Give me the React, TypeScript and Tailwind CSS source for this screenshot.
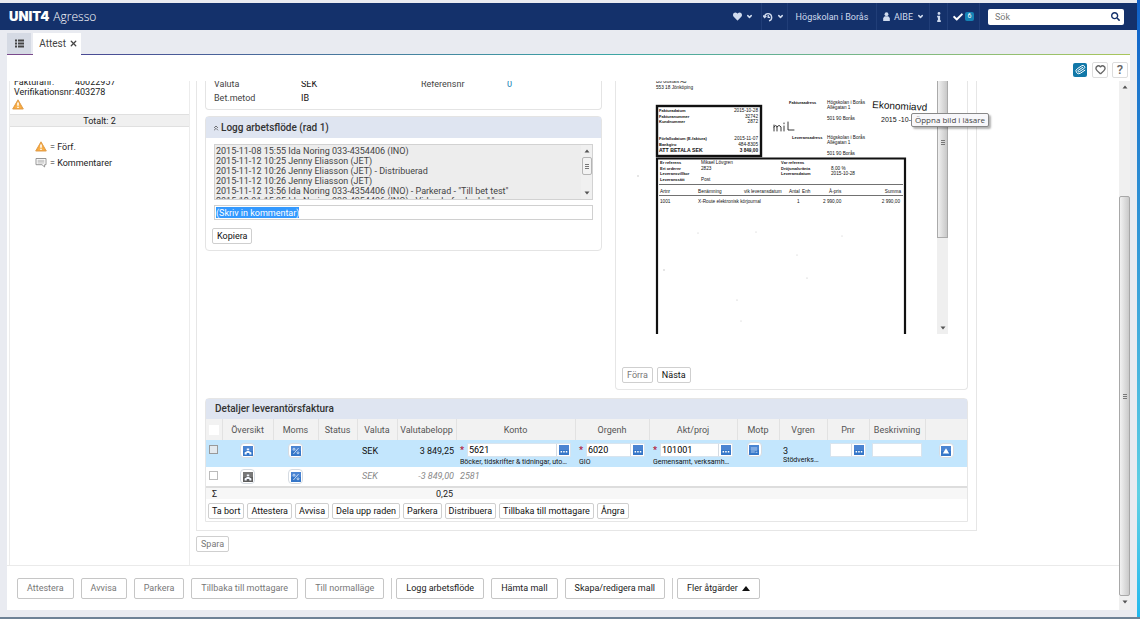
import type { ReactNode } from "react";
import { ChevronDown, ChevronsUp, Heart, Paperclip, X } from "lucide-react";
import { FaHeart, FaInfo, FaCheck, FaSearch } from "react-icons/fa";

const LOG = [
  "2015-11-08 15:55 Ida Noring 033-4354406 (INO)",
  "2015-11-12 10:25 Jenny Eliasson (JET)",
  "2015-11-12 10:26 Jenny Eliasson (JET) - Distribuerad",
  "2015-11-12 10:26 Jenny Eliasson (JET)",
  '2015-11-12 13:56 Ida Noring 033-4354406 (INO) - Parkerad - "Till bet test"',
  '2015-12-01 15:35 Ida Noring 033-4354406 (INO) - Vidarebefordrad - "."',
];

function WarningIcon() {
  return (
    <svg viewBox="0 0 12 11" className="h-[11px] w-3 shrink-0" aria-hidden="true">
      <path d="M6 .8 11.3 10H.7z" fill="#f29a2e" stroke="#e0a050" strokeWidth="1" strokeLinejoin="round" />
      <path d="M6 2.2 9.9 9.2H2.1z" fill="#f9b04a" />
      <path d="M6 3.4v3.4M6 7.8v1.3" stroke="#fff" strokeWidth="1.5" />
    </svg>
  );
}

function CommentIcon() {
  return (
    <svg viewBox="0 0 12 11" className="h-[11px] w-3 shrink-0" aria-hidden="true">
      <path d="M1 1.500h10v6.200H9.600V10L7 7.700H1z" fill="#fff" stroke="#8a8a8a" strokeWidth=".9" />
      <path d="M2.6 3.3h6.8M2.6 4.7h6.8M2.6 6h6.8" stroke="#a5a5a5" strokeWidth=".7" />
    </svg>
  );
}

function Tile({ kind, gray }: { kind: "overview" | "percent" | "dots" | "list" | "up"; gray?: boolean }) {
  return (
    <svg viewBox="0 0 10 10" className="size-[10px]" aria-hidden="true">
      <rect width="10" height="10" rx=".6" fill={gray ? "#5e5e5e" : "#3576c8"} />
      <rect width="10" height="5" rx=".6" fill={gray ? "#777" : "#4a84d2"} />
      {kind === "overview" && <path d="M3.800 2.400h2.400v1.600H3.800zM1.600 8.600V6.400L5 4.600l3.400 1.800v2.200H6.300V7H3.700v1.600z" fill="#f4f8ff" />}
      {kind === "percent" && (
        <g fill="none" stroke="#e2edfb" strokeWidth=".8">
          <path d="M7.600 2 2.400 8" /><circle cx="3" cy="3.200" r="1" /><circle cx="7" cy="6.800" r="1" />
        </g>
      )}
      {kind === "dots" && <path d="M1.600 6h1.500v1.500H1.600zM4.200 6h1.500v1.500H4.200zM6.800 6h1.500v1.500H6.800z" fill="#fff" />}
      {kind === "list" && <path d="M1.800 3h6.400M1.800 5h6.400M1.800 7h4M6.600 7.300h1.800" stroke="#d4e4fa" strokeWidth=".8" />}
      {kind === "up" && <path d="M5 2.200 8.200 7.600H1.800z" fill="#fff" />}
    </svg>
  );
}

function TileButton({ kind, gray, label }: { kind: "overview" | "percent" | "list" | "up"; gray?: boolean; label: string }) {
  return (
    <button type="button" aria-label={label} className="inline-flex size-[15px] items-center justify-center rounded-sm border border-[#d5dbe2] bg-white">
      <Tile kind={kind} gray={gray} />
    </button>
  );
}

function Lookup({ value, label, required }: { value: string; label: string; required?: boolean }) {
  return (
    <div className="flex h-[14px] items-center gap-[3px]">
      {required && <span className="w-1 text-[9px] leading-none font-bold text-[#b3203c]">*</span>}
      <div className="flex h-full min-w-0 flex-1 border border-[#d8e4ee] bg-white">
        <input aria-label={label} defaultValue={value} className="h-full w-0 min-w-0 flex-1 px-px text-[9px] text-black outline-none" />
        <button type="button" aria-label={"Sök " + label} className="flex w-[14px] items-center justify-center border-l border-[#d5dbe2]">
          <Tile kind="dots" />
        </button>
      </div>
    </div>
  );
}

function SmallButton({ children, muted, tight }: { children: ReactNode; muted?: boolean; tight?: boolean }) {
  return (
    <button
      type="button"
      className={
        "h-4 rounded-xs border border-[#cfcfcf] bg-white text-[9px] leading-none whitespace-nowrap " +
        (tight ? "px-[3px] " : "px-1 ") +
        (muted ? "text-[#777]" : "text-[#111]")
      }
    >
      {children}
    </button>
  );
}

function FooterButton({ children, muted }: { children: ReactNode; muted?: boolean }) {
  return (
    <button type="button" className={"flex h-[21px] items-center gap-1 rounded-xs border border-[#c6c6c6] bg-white px-[9px] text-[9px] leading-none whitespace-nowrap " + (muted ? "text-[#777]" : "text-[#1a1a1a]")}>
      {children}
    </button>
  );
}

function Arrow({ up }: { up?: boolean }) {
  return (
    <svg viewBox="0 0 6 4" className="h-1 w-[6px]" aria-hidden="true">
      <path d={up ? "M3 .5 5.5 3.5h-5z" : "M3 3.5.5.5h5z"} fill="#555" />
    </svg>
  );
}

function InvoiceScan() {
  return (
    <svg viewBox="620 81 317 253" className="h-[253px] w-[317px] shrink-0 font-['Liberation_Sans',Arial,sans-serif]" fill="#111" fontSize="4.7" role="img" aria-label="Fakturabild">
      <text x="656" y="83">Bo Gustafs AB</text>
      <text x="656" y="88.500">553 18  Jönköping</text>
      <g fill="none" stroke="#111">
        <rect x="657" y="106" width="104" height="50" strokeWidth="2.400" />
        <path d="M657 334V158.500H905V334" strokeWidth="2.200" />
        <path d="M659 184.500H903M659 195.500H903" strokeWidth=".6" />
      </g>
      <g fontWeight="bold" fontSize="4">
        <text x="659" y="112">Fakturadatum</text>
        <text x="659" y="117.500">Fakturanummer</text>
        <text x="659" y="123">Kundnummer</text>
        <text x="659" y="140">Förfallodatum (E-faktura)</text>
        <text x="659" y="145.500">Bankgiro</text>
        <text x="659" y="152" fontSize="5.200">ATT BETALA SEK</text>
        <text x="789" y="104">Fakturaadress</text>
        <text x="792" y="138.500">Leveransadress</text>
        <text x="660" y="164">Er referens</text>
        <text x="660" y="169.500">Ert ordernr</text>
        <text x="660" y="175">Leveransvillkor</text>
        <text x="660" y="180.500">Leveranssätt</text>
        <text x="781" y="164">Vår referens</text>
        <text x="781" y="169.500">Dröjsmålsränta</text>
        <text x="781" y="175">Leveransdatum</text>
      </g>
      <g textAnchor="end">
        <text x="758" y="112">2015-10-28</text>
        <text x="758" y="117.500">32742</text>
        <text x="758" y="123">2872</text>
        <text x="758" y="140">2015-11-07</text>
        <text x="758" y="145.500">484-8305</text>
        <text x="758" y="152" fontWeight="bold">3 849,00</text>
        <text x="901" y="192.500">Summa</text>
        <text x="900" y="203">2 990,00</text>
      </g>
      <text x="827" y="104">Högskolan i Borås</text>
      <text x="827" y="109">Allégatan 1</text>
      <text x="827" y="120">501 90  Borås</text>
      <text x="827" y="138.500">Högskolan i Borås</text>
      <text x="827" y="144">Allégatan 1</text>
      <text x="827" y="155">501 90  Borås</text>
      <text x="701" y="164">Mikael Lövgren</text>
      <text x="701" y="169.500">2823</text>
      <text x="701" y="180.500">Post</text>
      <text x="831" y="169.500">8,00 %</text>
      <text x="831" y="175">2015-10-28</text>
      <text x="660" y="192.500">Artnr</text>
      <text x="698" y="192.500">Benämning</text>
      <text x="744" y="192.500">vik leveransdatum</text>
      <text x="789" y="192.500">Antal</text>
      <text x="802" y="192.500">Enh</text>
      <text x="829" y="192.500">À-pris</text>
      <text x="660" y="203">1001</text>
      <text x="698" y="203">X-Route elektronisk körjournal</text>
      <text x="797" y="203">1</text>
      <text x="823" y="203">2 990,00</text>
      <text x="872" y="108" fontSize="10" transform="rotate(3 872 108)">Ekonomiavd</text>
      <text x="881" y="121.500" fontSize="7">2015 -10- 2</text>
      <path d="M774 131v-6M774 127q2-3 3 0v4M777 127q2-3 4 0v4M784 126v5M784 123v.8M788 122v8h6" fill="none" stroke="#222" strokeWidth=".9" strokeLinecap="round" />
      <g fill="#bbb">
        <circle cx="664" cy="270" r=".7" /><circle cx="638" cy="176" r=".7" /><circle cx="797" cy="255" r=".5" />
        <circle cx="807" cy="278" r=".6" /><circle cx="756" cy="232" r=".5" /><circle cx="842" cy="236" r=".5" />
        <circle cx="737" cy="300" r=".6" /><circle cx="741" cy="321" r=".5" /><circle cx="698" cy="233" r=".5" />
      </g>
    </svg>
  );
}

const TH = "border-r border-[#e2e2e2] font-normal";

export default function App() {
  return (
    <div className="flex h-screen flex-col overflow-hidden bg-[#e9ebf1] font-[Roboto,'Liberation_Sans',sans-serif] text-[9px] leading-[10px] text-[#333]">
      <div className="flex min-h-0 flex-1">
        <div className="flex min-w-0 flex-1 flex-col">
          <header className="mt-[3px] flex h-[27px] shrink-0 items-center bg-[#14316b] pl-[9px] text-[#d0dbee]">
            <a href="#" className="flex items-baseline gap-1 text-white">
              <span className="font-[Inter,sans-serif] text-[13px] leading-none font-black">UNIT4</span>
              <span className="font-['Open_Sans',sans-serif] text-[12px] leading-none font-light">Agresso</span>
            </a>
            <nav className="ml-auto flex h-full items-center">
              <button type="button" aria-label="Favoriter" className="flex h-full w-[31px] items-center gap-1 border-r border-[#213e78] pl-[2px]">
                <FaHeart size={9} /><ChevronDown size={7} strokeWidth={5} />
              </button>
              <button type="button" aria-label="Historik" className="flex h-full w-[26px] items-center gap-1 border-r border-[#213e78] pl-px">
                <svg viewBox="0 0 10 10" className="size-[10px]" fill="none" stroke="currentColor" strokeWidth="1.3" aria-hidden="true">
                  <path d="M1.5 5A3.600 3.600 0 1 1 6 8.800M0 3.500 1.600 5.600 3.400 4M5.200 3v2.400h2" />
                </svg>
                <ChevronDown size={7} strokeWidth={5} />
              </button>
              <span className="flex h-full w-[89px] items-center justify-center border-r border-[#213e78] text-[9px]">Högskolan i Borås</span>
              <button type="button" className="flex h-full w-[53px] items-center justify-end gap-1 border-r border-[#213e78] pr-[5px] text-[9px]">
                <svg viewBox="0 0 8 10" className="h-[9px] w-[7px]" fill="currentColor" aria-hidden="true">
                  <circle cx="4" cy="2.300" r="2.200" /><path d="M2 4.600h4l1.800 2V10H.2V6.600z" />
                </svg>
                AIBE<ChevronDown size={7} strokeWidth={5} />
              </button>
              <button type="button" aria-label="Information" className="flex h-full w-[18px] items-center justify-center border-r border-[#213e78]"><FaInfo size={10} /></button>
              <button type="button" aria-label="Uppgifter" className="flex h-full w-[32px] items-center justify-center gap-[2px] border-r border-[#213e78] text-white">
                <FaCheck size={10} />
                <span className="flex size-[9px] items-center justify-center rounded-xs bg-[#1583b5] text-[7px] leading-none">6</span>
              </button>
            </nav>
            <label className="mr-[13px] ml-2 flex h-4 w-[136px] items-center rounded-xs bg-white pr-1 pl-[7px] text-[#14316b]">
              <input type="search" aria-label="Sök" placeholder="Sök" className="w-0 min-w-0 flex-1 text-[9px] outline-none placeholder:text-[#777]" />
              <FaSearch size={9} />
            </label>
          </header>

          <div className="flex h-6 shrink-0 items-stretch px-[7px] pt-[3px]">
            <button type="button" aria-label="Meny" className="flex w-6 items-center justify-center bg-[#d5dae4] text-[#444]">
              <svg viewBox="0 0 9 9" className="size-[9px]" fill="currentColor" aria-hidden="true">
                <path d="M0 .500h2v2H0zM3 .500h6v2H3zM0 3.500h2v2H0zM3 3.500h6v2H3zM0 6.500h2v2H0zM3 6.500h6v2H3z" />
              </svg>
            </button>
            <button type="button" className="ml-[2px] flex w-12 items-center justify-end gap-[3px] bg-white pr-[3px] text-[10px] text-[#444]">
              Attest<X size={9} strokeWidth={3.5} />
            </button>
          </div>

          <div className="mr-[7px] ml-[7px] flex min-h-0 flex-1 flex-col bg-white">
            <div className="flex h-px shrink-0">
              <div className="w-[26px] bg-[#7a4a8c]" />
              <div className="w-12 bg-white" />
              <div className="flex-1 bg-linear-to-r from-[#4a4a94] via-[#3ba5a5] via-50% to-[#a9c65a]" />
            </div>
            <div className="flex h-[26px] shrink-0 items-center justify-end gap-1 pt-[3px] pr-[2px]">
              <button type="button" aria-label="Bilagor" className="mr-px flex size-[14px] items-center justify-center rounded-xs bg-[#1178a8] text-white"><Paperclip size={11} className="rotate-12" /></button>
              <button type="button" aria-label="Favorit" className="flex size-4 items-center justify-center rounded-xs border border-[#ddd] text-[#666]"><Heart size={11} strokeWidth={3} /></button>
              <button type="button" aria-label="Hjälp" className="flex size-4 items-center justify-center rounded-xs border border-[#ddd] text-[13px] leading-none font-medium text-[#666]">?</button>
            </div>

            <div className="flex min-h-0 flex-1">
              <div className="flex min-w-0 flex-1 flex-col">
                <div className="flex min-h-0 flex-1 overflow-hidden border-b border-[#eaeaea] pl-[2px]">
                  <aside className="w-[181px] shrink-0 overflow-hidden border-x border-[#ececec]">
                    <dl className="-mt-1 grid grid-cols-[61px_1fr] pl-1 leading-[10px] text-[#222]">
                      <dt>Fakturanr:</dt><dd>40022957</dd>
                      <dt>Verifikationsnr:</dt><dd>403278</dd>
                    </dl>
                    <div className="mt-[2px] h-[15px] pl-[2px]"><WarningIcon /></div>
                    <div className="flex h-[13px] items-center justify-center border-y border-[#e0e0e0] bg-[#f0f0f0] text-[#222]">Totalt: 2</div>
                    <div className="mt-[14px] flex flex-col gap-[5px] pl-[25px] text-[#222]">
                      <p className="flex items-center gap-[3px]"><WarningIcon />= Förf.</p>
                      <p className="flex items-center gap-[3px]"><CommentIcon />= Kommentarer</p>
                    </div>
                  </aside>

                  <main className="min-w-0 flex-1 pl-[6px]">
                    <div className="max-w-[781px] border-x border-b border-[#e6e6e6] px-2 pb-2">
                      <div className="flex h-[309px] items-start gap-[13px]">
                        <div className="min-w-0 flex-1">
                          <section className="flow-root h-[29px] rounded-b-sm border-x border-b border-[#e4e4e4]">
                            <dl className="-mt-[3px] grid grid-cols-[87px_120px_86px_1fr] gap-y-px pl-2 leading-[13px] text-[#444]">
                              <dt>Valuta</dt><dd className="text-[#111]">SEK</dd>
                              <dt>Referensnr</dt><dd className="text-[#1682b4]">0</dd>
                              <dt>Bet.metod</dt><dd className="text-[#111]">IB</dd>
                            </dl>
                          </section>
                          <section className="mt-[6px] rounded-sm border border-[#e4e4e4] pb-[6px]">
                            <h2 className="flex h-[21px] items-center gap-px bg-[#dfe5f1] pl-[6px] text-[10px] font-medium text-[#333]">
                              <ChevronsUp size={8} />Logg arbetsflöde (rad 1)
                            </h2>
                            <div className="mx-2 mt-[6px] flex h-14 border border-[#d2d2d2] bg-[#ededed]">
                              <div className="min-w-0 flex-1 overflow-hidden pt-px pl-px leading-[10px] whitespace-nowrap text-[#444]">
                                {LOG.map((l, i) => <p key={i}>{l}</p>)}
                              </div>
                              <div className="flex w-[11px] flex-col items-center bg-[#f0f0f0] py-1">
                                <Arrow up />
                                <div className="mt-1 flex h-[18px] w-[10px] flex-col items-center justify-center gap-px rounded-xs border border-[#b5b5b5] bg-[#f3f3f3]">
                                  <i className="h-px w-1 bg-[#777]" /><i className="h-px w-1 bg-[#777]" /><i className="h-px w-1 bg-[#777]" />
                                </div>
                                <div className="mt-auto"><Arrow /></div>
                              </div>
                            </div>
                            <div className="mx-2 mt-[5px] flex h-[15px] items-center border border-[#d0d0d0] bg-white px-px">
                              <input aria-label="Kommentar" defaultValue="(Skriv in kommentar)" className="field-sizing-content h-[11px] bg-[#3399ff] text-[9px] leading-none text-white outline-none" />
                            </div>
                            <div className="mt-2 pl-[6px]"><SmallButton>Kopiera</SmallButton></div>
                          </section>
                        </div>

                        <section className="flex w-[353px] shrink-0 flex-col rounded-b-sm border-x border-b border-[#e6e6e6] pb-[6px]">
                          <div className="relative flex h-[253px] pl-1">
                            <InvoiceScan />
                            <div className="flex w-[11px] flex-col bg-[#efefef]">
                              <div className="flex h-[157px] flex-col items-center border border-t-0 border-[#aaa] bg-linear-to-r from-[#f0f0f0] to-[#c8c8c8] pt-[59px]">
                                <div className="flex flex-col gap-px"><i className="h-px w-1 bg-[#777]" /><i className="h-px w-1 bg-[#777]" /><i className="h-px w-1 bg-[#777]" /></div>
                              </div>
                              <div className="mt-auto flex justify-center pb-1"><Arrow /></div>
                            </div>
                            <div role="tooltip" className="absolute top-[32px] left-[295px] flex h-[14px] items-center rounded-xs border border-[#888] bg-[#f7f7fa] px-[3px] font-['Open_Sans',sans-serif] text-[8px] whitespace-nowrap text-[#444] shadow-[2px_2px_2px_rgba(0,0,0,0.3)]">Öppna bild i läsare</div>
                          </div>
                          <div className="mt-[33px] flex gap-1 pl-[6px]">
                            <SmallButton muted>Förra</SmallButton>
                            <SmallButton>Nästa</SmallButton>
                          </div>
                        </section>
                      </div>

                      <section className="mt-2 rounded-t-sm border border-[#e6e6e6]">
                        <h2 className="flex h-5 items-center bg-[#dfe5f1] pl-[9px] text-[10px] font-medium text-[#333]">Detaljer leverantörsfaktura</h2>
                        <table className="w-full table-fixed border-collapse">
                          <colgroup>
                            <col className="w-[16px]" /><col className="w-[51px]" /><col className="w-[45px]" /><col className="w-[39px]" /><col className="w-[40px]" />
                            <col className="w-[59px]" /><col className="w-[119px]" /><col className="w-[74px]" /><col className="w-[88px]" /><col className="w-[42px]" />
                            <col className="w-[48px]" /><col className="w-[42px]" /><col className="w-[56px]" /><col className="w-[42px]" />
                          </colgroup>
                          <thead>
                            <tr className="h-[21px] bg-[#f2f2f2] text-[#555]">
                              <th className={TH}><span className="ml-[3px] block size-[10px] bg-white" /></th>
                              {["Översikt", "Moms", "Status", "Valuta", "Valutabelopp", "Konto", "Orgenh", "Akt/proj", "Motp", "Vgren", "Pnr", "Beskrivning"].map((h) => (
                                <th key={h} scope="col" className={TH}>{h}</th>
                              ))}
                              <th />
                            </tr>
                          </thead>
                          <tbody>
                            <tr className="h-[27px] bg-[#c3e6fd] align-top text-[#111]">
                              <td className="pt-[5px] pl-[3px]"><input type="checkbox" aria-label="Välj rad 1" className="block size-[9px] appearance-none border border-[#999] bg-[#e3e9ee]" /></td>
                              <td className="pt-[3px] text-center"><TileButton kind="overview" label="Översikt" /></td>
                              <td className="pt-[3px] text-center"><TileButton kind="percent" label="Moms" /></td>
                              <td />
                              <td className="pt-[6px] pl-[5px]">SEK</td>
                              <td className="pt-[6px] pr-[2px] text-right">3 849,25</td>
                              <td className="px-1 pt-[3px]"><Lookup value="5621" label="Konto" required /><p className="truncate text-[7px] leading-[10px]">Böcker, tidskrifter &amp; tidningar, utomlands</p></td>
                              <td className="px-1 pt-[3px]"><Lookup value="6020" label="Orgenh" required /><p className="text-[7px] leading-[10px]">GIO</p></td>
                              <td className="px-1 pt-[3px]"><Lookup value="101001" label="Akt/proj" required /><p className="truncate pr-[2px] text-[7px] leading-[10px]">Gemensamt, verksamhetsstöd</p></td>
                              <td className="pt-[2px] pr-2 text-center"><TileButton kind="list" label="Motp" /></td>
                              <td className="px-1 pt-[6px]">3<p className="truncate pr-[2px] text-[7px] leading-[9px]">Stödverksamhet</p></td>
                              <td className="px-[3px] pt-[3px]"><Lookup value="" label="Pnr" /></td>
                              <td className="px-[3px] pt-[3px]"><input aria-label="Beskrivning" className="block h-[14px] w-full border border-[#d8e4ee] bg-white" /></td>
                              <td className="pt-[3px] text-center"><TileButton kind="up" label="Upp" /></td>
                            </tr>
                            <tr className="h-[20px] border-b-2 border-[#ddd] align-top text-[#888] italic">
                              <td className="pt-[4px] pl-[3px]"><input type="checkbox" aria-label="Välj rad 2" className="block size-[9px] appearance-none border border-[#bbb] bg-white" /></td>
                              <td className="pt-[2px] text-center"><TileButton kind="overview" gray label="Översikt" /></td>
                              <td className="pt-[2px] text-center"><TileButton kind="percent" label="Moms" /></td>
                              <td />
                              <td className="pt-[4px] pl-[5px]">SEK</td>
                              <td className="pt-[4px] pr-[2px] text-right">-3 849,00</td>
                              <td className="px-1 pt-[4px]">2581</td>
                              <td colSpan={7} />
                            </tr>
                          </tbody>
                          <tfoot>
                            <tr className="h-3 bg-[#f7f7f7] text-[#222]">
                              <td colSpan={2} className="pl-[6px]">Σ</td>
                              <td colSpan={3} />
                              <td className="pr-[3px] text-right">0,25</td>
                              <td colSpan={8} />
                            </tr>
                          </tfoot>
                        </table>
                        <div className="flex gap-[3px] px-[2px] pt-1 pb-[2px]">
                          {["Ta bort", "Attestera", "Avvisa", "Dela upp raden", "Parkera", "Distribuera", "Tillbaka till mottagare", "Ångra"].map((b) => (
                            <SmallButton key={b} tight>{b}</SmallButton>
                          ))}
                        </div>
                      </section>
                    </div>
                    <div className="mt-[5px]"><SmallButton muted>Spara</SmallButton></div>
                  </main>
                </div>

                <footer className="flex h-[44px] shrink-0 items-center gap-[7px] pl-[10px]">
                  <FooterButton muted>Attestera</FooterButton>
                  <FooterButton muted>Avvisa</FooterButton>
                  <FooterButton muted>Parkera</FooterButton>
                  <FooterButton muted>Tillbaka till mottagare</FooterButton>
                  <FooterButton muted>Till normalläge</FooterButton>
                  <div className="flex items-center gap-[7px] border-l border-[#ccc] pl-1">
                    <FooterButton>Logg arbetsflöde</FooterButton>
                    <FooterButton>Hämta mall</FooterButton>
                    <FooterButton>Skapa/redigera mall</FooterButton>
                  </div>
                  <div className="border-l border-[#ccc] pl-1">
                    <FooterButton>Fler åtgärder
                      <svg viewBox="0 0 8 5" className="h-[5px] w-2" aria-hidden="true"><path d="M4 0 8 5H0z" fill="#111" /></svg>
                    </FooterButton>
                  </div>
                </footer>
              </div>

              <div className="flex w-[11px] shrink-0 flex-col items-center bg-[#f0f0f0] pt-1 pb-[6px]">
                <Arrow up />
                <div className="mt-auto flex h-[400px] w-full flex-col items-center justify-center gap-px rounded-xs border border-[#a8a8a8] bg-linear-to-r from-[#f2f2f2] to-[#cacaca]">
                  <i className="h-px w-1 bg-[#777]" /><i className="h-px w-1 bg-[#777]" /><i className="h-px w-1 bg-[#777]" />
                </div>
                <div className="mt-1"><Arrow /></div>
              </div>
            </div>
          </div>
          <div className="h-[7px] shrink-0" />
        </div>
        <div className="w-[3px] shrink-0 bg-linear-to-b from-[#1060c8] via-[#5fd0e4] via-80% to-[#1fb8ee]" />
      </div>
      <div className="h-[2px] shrink-0 bg-[#6e8296]" />
    </div>
  );
}
